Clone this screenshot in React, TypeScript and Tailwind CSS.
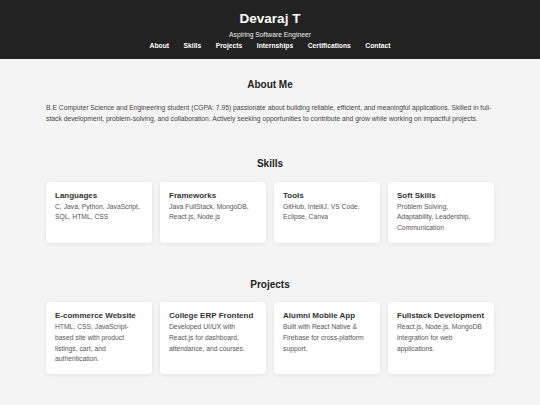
import React from "react";

/* ---------------- DATA ---------------- */
const NAV_LINKS = ["About", "Skills", "Projects", "Internships", "Certifications", "Contact"];

const SKILLS = [
  { title: "Languages", text: "C, Java, Python, JavaScript, SQL, HTML, CSS" },
  { title: "Frameworks", text: "Java FullStack, MongoDB, React.js, Node.js" },
  { title: "Tools", text: "GitHub, IntelliJ, VS Code, Eclipse, Canva" },
  { title: "Soft Skills", text: "Problem Solving, Adaptability, Leadership, Communication" },
];

const PROJECTS = [
  {
    title: "E-commerce Website",
    text: "HTML, CSS, JavaScript-based site with product listings, cart, and authentication.",
  },
  {
    title: "College ERP Frontend",
    text: "Developed UI/UX with React.js for dashboard, attendance, and courses.",
  },
  {
    title: "Alumni Mobile App",
    text: "Built with React Native & Firebase for cross-platform support.",
  },
  {
    title: "Fullstack Development",
    text: "React.js, Node.js, MongoDB integration for web applications.",
  },
];

type CardItem = { title: string; text: string };

const Card: React.FC<{ item: CardItem }> = ({ item }) => (
  <div className="bg-white rounded-[4px] shadow-[0_1px_4px_rgba(0,0,0,0.08)] px-[9px] py-[9px]">
    <h3 className="text-[8px] font-bold leading-[10px] text-[#333] mb-[1px]">{item.title}</h3>
    <p className="text-[6.75px] leading-[10.8px] text-[#555]">{item.text}</p>
  </div>
);

/* ---------------- COMPONENT ---------------- */
const App: React.FC = () => {
  return (
    <div className="min-h-[405px] bg-[#f4f4f4] font-['Liberation_Sans',Arial,sans-serif]">
      {/* Header */}
      <header className="bg-[#222] text-white text-center pt-[10px] pb-[8px]">
        <h1 className="text-[13.5px] font-bold leading-[17px]">Devaraj T</h1>
        <p className="text-[6.75px] leading-[10px] mt-[3px] text-[#eee]">Aspiring Software Engineer</p>
        <nav className="flex justify-center gap-[14.5px] mt-[1px] text-[6.75px] font-bold leading-[10px]">
          {NAV_LINKS.map((link) => (
            <a key={link} href={`#${link.toLowerCase()}`} className="text-white">
              {link}
            </a>
          ))}
        </nav>
      </header>

      <main className="px-[46px]">
        {/* About */}
        <section id="about" className="pt-[19.5px]">
          <h2 className="text-center text-[10px] font-bold leading-[12px] text-[#222] mb-[11.5px]">About Me</h2>
          <p className="text-[6.75px] leading-[11px] text-[#444]">
            B.E Computer Science and Engineering student (CGPA: 7.95) passionate about building reliable,
            efficient, and meaningful applications. Skilled in full-stack development, problem-solving, and
            collaboration. Actively seeking opportunities to contribute and grow while working on impactful
            projects.
          </p>
        </section>

        {/* Skills */}
        <section id="skills" className="pt-[34.3px]">
          <h2 className="text-center text-[10px] font-bold leading-[12px] text-[#222] mb-[11.4px]">Skills</h2>
          <div className="grid grid-cols-4 gap-[8px]">
            {SKILLS.map((s) => (
              <Card key={s.title} item={s} />
            ))}
          </div>
        </section>

        {/* Projects */}
        <section id="projects" className="pt-[35.7px]">
          <h2 className="text-center text-[10px] font-bold leading-[12px] text-[#222] mb-[11.2px]">Projects</h2>
          <div className="grid grid-cols-4 gap-[8px]">
            {PROJECTS.map((p) => (
              <Card key={p.title} item={p} />
            ))}
          </div>
        </section>
      </main>
    </div>
  );
};

export default App;
